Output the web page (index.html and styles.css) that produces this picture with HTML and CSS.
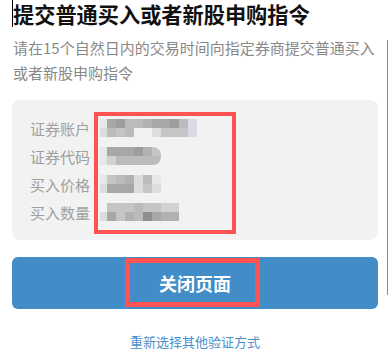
FILE: index.html
```html
<!DOCTYPE html>
<html lang="zh-CN">
<head>
<meta charset="UTF-8">
<meta name="viewport" content="width=device-width, initial-scale=1.0">
<title>提交指令</title>
<link rel="stylesheet" href="styles.css">
</head>
<body>
<div class="page">
    <h1 class="title">提交普通买入或者新股申购指令</h1>
    <p class="desc">请在15个自然日内的交易时间向指定券商提交普通买入或者新股申购指令</p>

    <div class="card">
        <div class="row">
            <span class="label">证券账户</span>
            <div class="mosaic">
                <div class="line">
                    <i class="w7 g8"></i><i class="g2"></i><i class="g1"></i><i class="g4"></i><i class="g4"></i><i class="g3"></i><i class="g2"></i><i class="g2"></i><i class="g1"></i><i class="g4"></i><i class="gb"></i>
                </div>
                <div class="line">
                    <i class="w7 g7"></i><i class="g4"></i><i class="g5"></i><i class="g4"></i><i class="g0"></i><i class="g0"></i><i class="g7"></i><i class="g5"></i><i class="g5"></i><i class="g5"></i><i class="gb"></i>
                </div>
            </div>
        </div>
        <div class="row">
            <span class="label">证券代码</span>
            <div class="mosaic round">
                <div class="line">
                    <i class="w7 g8"></i><i class="g2"></i><i class="g2"></i><i class="g2"></i><i class="g1"></i><i class="g3"></i><i class="g5"></i>
                </div>
                <div class="line">
                    <i class="w7 g8"></i><i class="g6"></i><i class="g4"></i><i class="g4"></i><i class="g4"></i><i class="g4"></i><i class="g4"></i>
                </div>
            </div>
        </div>
        <div class="row">
            <span class="label">买入价格</span>
            <div class="mosaic">
                <div class="line">
                    <i class="w7 g8"></i><i class="g5"></i><i class="g4"></i><i class="g3"></i><i class="g7"></i><i class="g4"></i><i class="g8"></i>
                </div>
                <div class="line">
                    <i class="w7 g7"></i><i class="g2"></i><i class="g2"></i><i class="g2"></i><i class="g7"></i><i class="g5"></i><i class="g7"></i>
                </div>
            </div>
        </div>
        <div class="row">
            <span class="label">买入数量</span>
            <div class="mosaic">
                <div class="line">
                    <i class="w7 g0"></i><i class="g5"></i><i class="g5"></i><i class="g5"></i><i class="g4"></i><i class="g5"></i><i class="g5"></i><i class="g6"></i><i class="g6"></i>
                </div>
                <div class="line">
                    <i class="w7 g7"></i><i class="g2"></i><i class="g5"></i><i class="g3"></i><i class="g4"></i><i class="gd"></i><i class="g2"></i><i class="g3"></i><i class="g3"></i>
                </div>
            </div>
        </div>
        <div class="mark mark-card"></div>
    </div>

    <button type="button" class="close-button">关闭页面<span class="mark mark-button"></span></button>

    <a class="other-link" href="#">重新选择其他验证方式</a>
</div>
<div class="edge"></div>
</body>
</html>
```

FILE: styles.css
```css
body {
    margin: 0;
    font-family: "Noto Sans CJK SC", "Noto Sans", sans-serif;
    background: #fff;
}
.page {
    padding: 0 11px 0 12px;
}
.title {
    margin: 0;
    font-size: 21.2px;
    line-height: 27px;
    font-weight: bold;
    color: #111;
    border-left: 1px solid #000;
    white-space: nowrap;
}
.desc {
    margin: 8px 0 0;
    font-size: 15px;
    line-height: 25px;
    color: #888;
    padding-left: 1px;
}
.card {
    position: relative;
    margin-top: 15px;
    background: #f2f2f2;
    border-radius: 8px;
    padding: 14px 18px;
}
.row {
    display: flex;
    align-items: center;
    height: 28px;
}
.label {
    width: 70px;
    font-size: 15px;
    color: #a0a0a0;
}
.mosaic {
    display: flex;
    flex-direction: column;
}
.mosaic.round {
    border-radius: 0 8px 8px 0;
    overflow: hidden;
}
.line {
    display: flex;
}
.line i {
    display: block;
    width: 9px;
    height: 9px;
}
.line i.w7 { width: 7px; }
.g0 { background: transparent; }
.g1 { background: #9d9d9f; }
.g2 { background: #a7a7a9; }
.g3 { background: #b1b1b2; }
.g4 { background: #bbbbbb; }
.g5 { background: #c5c5c5; }
.g6 { background: #d2d2d2; }
.g7 { background: #dddddd; }
.g8 { background: #e7e7e7; }
.gb { background: #d8dbe4; }
.gd { background: #8d8f8f; }
.mark {
    position: absolute;
    box-sizing: border-box;
    border: 4px solid #ff5252;
    pointer-events: none;
}
.mark-card {
    left: 82px;
    top: 12px;
    width: 142px;
    height: 122px;
}
.close-button {
    position: relative;
    display: block;
    width: 100%;
    height: 52px;
    margin-top: 17px;
    background: #428dc7;
    color: #fff;
    border: none;
    border-radius: 6px;
    font-family: inherit;
    font-size: 18px;
    font-weight: bold;
    cursor: pointer;
}
.mark-button {
    left: 113px;
    top: 1px;
    width: 135px;
    height: 49px;
    border-width: 5px;
}
.other-link {
    display: block;
    margin-top: 23px;
    text-align: center;
    font-size: 13px;
    line-height: 20px;
    color: #4a8fcc;
    text-decoration: none;
}
.edge {
    position: absolute;
    right: 1px;
    top: 40px;
    width: 1px;
    height: 255px;
    background: #8a8a8a;
}
```
